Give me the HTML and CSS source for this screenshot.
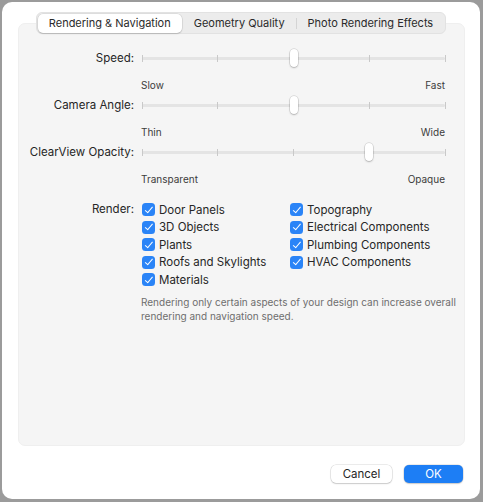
FILE: index.html
```html
<!DOCTYPE html>
<html lang="en">
<head>
    <meta charset="UTF-8">
    <meta name="viewport" content="width=device-width, initial-scale=1.0">
    <title>Preferences</title>
    <link rel="stylesheet" href="styles.css">
</head>
<body>

    <div class="window">

        <!-- Tabs bovenaan -->
        <div class="tabs">
            <div class="tab active">Rendering &amp; Navigation</div>
            <div class="tab">Geometry Quality</div>
            <div class="tab-sep"></div>
            <div class="tab">Photo Rendering Effects</div>
        </div>

        <div class="panel">

            <div class="slider-row">
                <div class="row-label">Speed:</div>
                <div class="slider">
                    <div class="track"></div>
                    <span class="tick" style="left: 0%"></span>
                    <span class="tick" style="left: 25%"></span>
                    <span class="tick" style="left: 50%"></span>
                    <span class="tick" style="left: 75%"></span>
                    <span class="tick" style="left: 100%"></span>
                    <span class="thumb" style="left: 50%"></span>
                </div>
            </div>
            <div class="ends"><span>Slow</span><span>Fast</span></div>

            <div class="slider-row">
                <div class="row-label">Camera Angle:</div>
                <div class="slider">
                    <div class="track"></div>
                    <span class="tick" style="left: 0%"></span>
                    <span class="tick" style="left: 25%"></span>
                    <span class="tick" style="left: 50%"></span>
                    <span class="tick" style="left: 75%"></span>
                    <span class="tick" style="left: 100%"></span>
                    <span class="thumb" style="left: 50%"></span>
                </div>
            </div>
            <div class="ends"><span>Thin</span><span>Wide</span></div>

            <div class="slider-row">
                <div class="row-label">ClearView Opacity:</div>
                <div class="slider">
                    <div class="track"></div>
                    <span class="tick" style="left: 0%"></span>
                    <span class="tick" style="left: 25%"></span>
                    <span class="tick" style="left: 50%"></span>
                    <span class="tick" style="left: 75%"></span>
                    <span class="tick" style="left: 100%"></span>
                    <span class="thumb" style="left: 75%"></span>
                </div>
            </div>
            <div class="ends"><span>Transparent</span><span>Opaque</span></div>

            <div class="render">
                <div class="row-label">Render:</div>
                <div class="checks">
                    <div class="check-col">
                        <label class="check"><span class="box"></span>Door Panels</label>
                        <label class="check"><span class="box"></span>3D Objects</label>
                        <label class="check"><span class="box"></span>Plants</label>
                        <label class="check"><span class="box"></span>Roofs and Skylights</label>
                        <label class="check"><span class="box"></span>Materials</label>
                    </div>
                    <div class="check-col">
                        <label class="check"><span class="box"></span>Topography</label>
                        <label class="check"><span class="box"></span>Electrical Components</label>
                        <label class="check"><span class="box"></span>Plumbing Components</label>
                        <label class="check"><span class="box"></span>HVAC Components</label>
                    </div>
                </div>
            </div>

            <p class="hint">Rendering only certain aspects of your design can increase overall rendering and navigation speed.</p>
        </div>

        <div class="buttons">
            <button class="btn">Cancel</button>
            <button class="btn primary">OK</button>
        </div>
    </div>

</body>
</html>
```

FILE: styles.css
```css
body {
    margin: 0;
    background: #9b9b9b;
    font-family: Inter, "Noto Sans", sans-serif;
    font-size: 11.5px;
    color: #262626;
}
.window {
    margin: 2px 3px 3px 2px;
    height: 497px;
    background: #ffffff;
    border-radius: 10px;
    display: flex;
    flex-direction: column;
    align-items: center;
}
.tabs {
    position: relative;
    z-index: 1;
    margin-top: 10px;
    margin-bottom: -11px;
    height: 22px;
    display: flex;
    align-items: center;
    padding: 0 1px;
    background: #ececec;
    border: 1px solid #e2e2e2;
    border-radius: 6px;
    box-sizing: border-box;
    font-size: 11px;
}
.tab {
    height: 19px;
    line-height: 19px;
    padding: 0 11px;
    color: #2a2a2a;
    border-radius: 5px;
}
.tab.active {
    background: #ffffff;
    box-shadow: 0 0 0 0.5px rgba(0, 0, 0, 0.12), 0 1px 1.5px rgba(0, 0, 0, 0.15);
    margin-right: 1px;
}
.tab-sep {
    width: 1px;
    height: 11px;
    background: #d4d4d4;
}
.panel {
    align-self: stretch;
    margin: 0 15px 0 16px;
    height: 423px;
    background: #f5f5f5;
    border: 1px solid #efefef;
    border-radius: 7px;
    box-sizing: border-box;
    padding-top: 23px;
}
.slider-row {
    display: grid;
    grid-template-columns: 115px 303px;
    column-gap: 8px;
    height: 22px;
    align-items: center;
}
.row-label {
    text-align: right;
    color: #262626;
}
.slider {
    position: relative;
    height: 22px;
}
.track {
    position: absolute;
    left: 0;
    right: 0;
    top: 10px;
    height: 3px;
    border-radius: 2px;
    background: #e4e4e4;
}
.tick {
    position: absolute;
    top: 8px;
    width: 1px;
    height: 7px;
    margin-left: -0.5px;
    background: #c9c9c9;
}
.thumb {
    position: absolute;
    top: 2px;
    width: 8px;
    height: 18px;
    margin-left: -4px;
    background: #ffffff;
    border-radius: 4px;
    box-shadow: 0 0 0 0.5px rgba(0, 0, 0, 0.18), 0 1px 2px rgba(0, 0, 0, 0.2);
}
.ends {
    display: flex;
    justify-content: space-between;
    margin: 9px 19px 2px 122px;
    height: 14px;
    line-height: 14px;
    font-size: 10px;
    color: #3c3c3c;
}
.render {
    display: grid;
    grid-template-columns: 115px auto;
    column-gap: 8px;
    margin-top: 15px;
}
.render .row-label {
    line-height: 17.5px;
}
.checks {
    display: flex;
}
.check-col {
    width: 148px;
}
.check {
    display: flex;
    align-items: center;
    height: 17.5px;
    color: #262626;
}
.box {
    width: 13px;
    height: 13px;
    margin-right: 4px;
    border-radius: 3.5px;
    background: #2a84f7;
    display: inline-block;
    position: relative;
}
.box::after {
    content: "";
    position: absolute;
    left: 4.5px;
    top: 1.5px;
    width: 3px;
    height: 6.5px;
    border: solid #ffffff;
    border-width: 0 1.8px 1.8px 0;
    transform: rotate(40deg);
}
.hint {
    margin: 6px 8px 0 122px;
    font-size: 10px;
    line-height: 14px;
    color: #6e6e6e;
}
.buttons {
    align-self: stretch;
    display: flex;
    justify-content: flex-end;
    gap: 12px;
    margin-top: 19px;
    padding-right: 17px;
}
.btn {
    font-family: inherit;
    font-size: 11.5px;
    height: 18px;
    width: 61px;
    padding: 0;
    border: none;
    border-radius: 5px;
    background: #ffffff;
    color: #262626;
    box-shadow: 0 0 0 0.5px rgba(0, 0, 0, 0.15), 0 1px 1.5px rgba(0, 0, 0, 0.15);
}
.btn.primary {
    width: 59px;
    background: #1d7ef5;
    color: #ffffff;
}
```
